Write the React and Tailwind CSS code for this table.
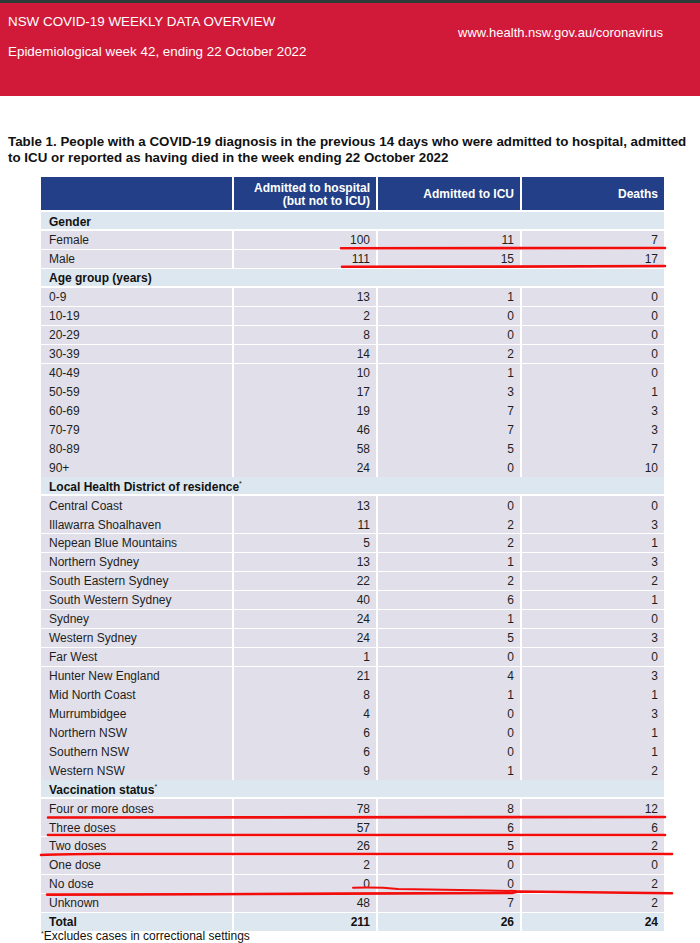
import React from "react";

const sections = [
  { title: "Gender", star: false, rows: [["Female", 100, 11, 7], ["Male", 111, 15, 17]] },
  {
    title: "Age group (years)",
    star: false,
    rows: [
      ["0-9", 13, 1, 0],
      ["10-19", 2, 0, 0],
      ["20-29", 8, 0, 0],
      ["30-39", 14, 2, 0],
      ["40-49", 10, 1, 0],
      ["50-59", 17, 3, 1],
      ["60-69", 19, 7, 3],
      ["70-79", 46, 7, 3],
      ["80-89", 58, 5, 7],
      ["90+", 24, 0, 10],
    ],
  },
  {
    title: "Local Health District of residence",
    star: true,
    rows: [
      ["Central Coast", 13, 0, 0],
      ["Illawarra Shoalhaven", 11, 2, 3],
      ["Nepean Blue Mountains", 5, 2, 1],
      ["Northern Sydney", 13, 1, 3],
      ["South Eastern Sydney", 22, 2, 2],
      ["South Western Sydney", 40, 6, 1],
      ["Sydney", 24, 1, 0],
      ["Western Sydney", 24, 5, 3],
      ["Far West", 1, 0, 0],
      ["Hunter New England", 21, 4, 3],
      ["Mid North Coast", 8, 1, 1],
      ["Murrumbidgee", 4, 0, 3],
      ["Northern NSW", 6, 0, 1],
      ["Southern NSW", 6, 0, 1],
      ["Western NSW", 9, 1, 2],
    ],
  },
  {
    title: "Vaccination status",
    star: true,
    rows: [
      ["Four or more doses", 78, 8, 12],
      ["Three doses", 57, 6, 6],
      ["Two doses", 26, 5, 2],
      ["One dose", 2, 0, 0],
      ["No dose", 0, 0, 2],
      ["Unknown", 48, 7, 2],
    ],
  },
];

function DataRow({ r }) {
  return (
    <div className="mt-[2px] grid grid-cols-[191px_142px_142px_142px] gap-x-[2px] h-[16.95px] leading-[16.95px] text-[12px] text-[#1e1e1e]">
      <div className="bg-[#e1e0ea] pl-[8px] pt-[1.5px]">{r[0]}</div>
      <div className="bg-[#e1e0ea] pr-[6px] pt-[1.5px] text-right">{r[1]}</div>
      <div className="bg-[#e1e0ea] pr-[6px] pt-[1.5px] text-right">{r[2]}</div>
      <div className="bg-[#e1e0ea] pr-[6px] pt-[1.5px] text-right">{r[3]}</div>
    </div>
  );
}

export default function App() {
  return (
    <div
      className="relative w-[700px] h-[943px] overflow-hidden bg-white"
      style={{ fontFamily: '"Liberation Sans", Arial, sans-serif' }}
    >
      <div className="h-[3px] bg-[#2f3a3a]" />
      <div className="h-[93px] bg-[#d11a39] flex justify-between text-white text-[13.4px] leading-[16px]">
        <div className="pl-[8px] pt-[11px]">
          <div>NSW COVID-19 WEEKLY DATA OVERVIEW</div>
          <div className="mt-[14px]">Epidemiological week 42, ending 22 October 2022</div>
        </div>
        <div className="pr-[37px] pt-[22px] text-[13px]">www.health.nsw.gov.au/coronavirus</div>
      </div>

      <div className="pl-[8px] pt-[38px] text-[13.35px] leading-[16px] font-bold text-[#111]">
        <div>Table 1. People with a COVID-19 diagnosis in the previous 14 days who were admitted to hospital, admitted</div>
        <div>to ICU or reported as having died in the week ending 22 October 2022</div>
      </div>

      <div className="ml-[41px] mt-[11px] w-[623px]">
        <div className="grid grid-cols-[191px_142px_142px_142px] gap-x-[2px] h-[33px] text-white font-bold text-[12px] leading-[13px]">
          <div className="bg-[#233f87]" />
          <div className="bg-[#233f87] flex flex-col justify-center items-end pr-[6px] pt-[2px] text-right">
            <div>Admitted to hospital</div>
            <div>(but not to ICU)</div>
          </div>
          <div className="bg-[#233f87] flex items-center justify-end pr-[6px] pt-[2px]">Admitted to ICU</div>
          <div className="bg-[#233f87] flex items-center justify-end pr-[6px] pt-[2px]">Deaths</div>
        </div>

        {sections.map((s) => (
          <React.Fragment key={s.title}>
            <div className="mt-[2px] h-[16.95px] leading-[16.95px] bg-[#dde7ef] pl-[8px] pt-[1.5px] text-[12px] font-bold text-[#111]">
              {s.title}
              {s.star && <span className="relative top-[-5px] text-[7px] font-normal">*</span>}
            </div>
            {s.rows.map((r) => (
              <DataRow key={r[0]} r={r} />
            ))}
          </React.Fragment>
        ))}

        <div className="mt-[2px] grid grid-cols-[191px_142px_142px_142px] gap-x-[2px] h-[16.95px] leading-[16.95px] text-[12px] font-bold text-[#111]">
          <div className="bg-[#dde7ef] pl-[8px] pt-[1.5px]">Total</div>
          <div className="bg-[#dde7ef] pr-[6px] pt-[1.5px] text-right">211</div>
          <div className="bg-[#dde7ef] pr-[6px] pt-[1.5px] text-right">26</div>
          <div className="bg-[#dde7ef] pr-[6px] pt-[1.5px] text-right">24</div>
        </div>
        <div className="text-[12px] leading-[12px] text-[#111]">
          <span className="relative top-[-4px] text-[7px]">*</span>Excludes cases in correctional settings
        </div>
      </div>

      <svg
        className="absolute left-0 top-0 pointer-events-none"
        width="700"
        height="943"
        viewBox="0 0 700 943"
      >
        <g stroke="#f20c0c" strokeWidth="2.6" fill="none" strokeLinecap="round">
          <path d="M341 248.3 L665 248" />
          <path d="M342 266.7 L505 266.6 L665 266" />
          <path d="M48 817.5 L665 817" />
          <path d="M48 835 L665 835" />
          <path d="M41 855 Q60 854 100 854 L672 854" />
          <path d="M47 894.6 L205 894.2 L340 893.6 L512 893 L518 891.5 L672 893.3" />
          <path d="M353 887.8 Q378 887 398 889 L475 890.3 L516 891" strokeWidth="2" />
        </g>
      </svg>
    </div>
  );
}
